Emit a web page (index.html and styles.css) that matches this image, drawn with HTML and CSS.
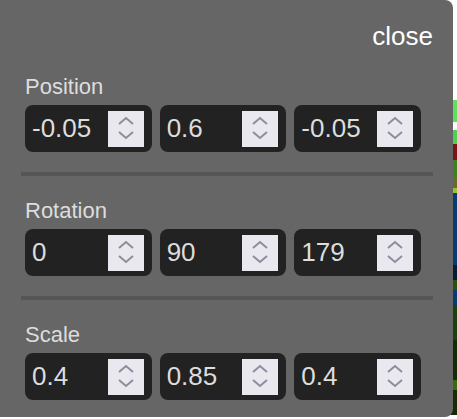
FILE: index.html
```html
<!DOCTYPE html>
<html>
	<head>
		<meta charset="utf-8">
		<title>Transform</title>
		<link rel="stylesheet" href="styles.css">
	</head>
	<body>
		<section class="panel">
			<div class="top">
				<a href="javascript:;" class="close">close</a>
			</div>
			<div class="group">
				<div class="label">Position</div>
				<div class="row">
					<div class="field"><input type="text" value="-0.05"><span class="spin"><svg viewBox="0 0 36 36"><polyline points="11,13 18,7 25,13"/><polyline points="11,21 18,27 25,21"/></svg></span></div>
					<div class="field"><input type="text" value="0.6"><span class="spin"><svg viewBox="0 0 36 36"><polyline points="11,13 18,7 25,13"/><polyline points="11,21 18,27 25,21"/></svg></span></div>
					<div class="field"><input type="text" value="-0.05"><span class="spin"><svg viewBox="0 0 36 36"><polyline points="11,13 18,7 25,13"/><polyline points="11,21 18,27 25,21"/></svg></span></div>
				</div>
			</div>
			<hr>
			<div class="group">
				<div class="label">Rotation</div>
				<div class="row">
					<div class="field"><input type="text" value="0"><span class="spin"><svg viewBox="0 0 36 36"><polyline points="11,13 18,7 25,13"/><polyline points="11,21 18,27 25,21"/></svg></span></div>
					<div class="field"><input type="text" value="90"><span class="spin"><svg viewBox="0 0 36 36"><polyline points="11,13 18,7 25,13"/><polyline points="11,21 18,27 25,21"/></svg></span></div>
					<div class="field"><input type="text" value="179"><span class="spin"><svg viewBox="0 0 36 36"><polyline points="11,13 18,7 25,13"/><polyline points="11,21 18,27 25,21"/></svg></span></div>
				</div>
			</div>
			<hr>
			<div class="group">
				<div class="label">Scale</div>
				<div class="row">
					<div class="field"><input type="text" value="0.4"><span class="spin"><svg viewBox="0 0 36 36"><polyline points="11,13 18,7 25,13"/><polyline points="11,21 18,27 25,21"/></svg></span></div>
					<div class="field"><input type="text" value="0.85"><span class="spin"><svg viewBox="0 0 36 36"><polyline points="11,13 18,7 25,13"/><polyline points="11,21 18,27 25,21"/></svg></span></div>
					<div class="field"><input type="text" value="0.4"><span class="spin"><svg viewBox="0 0 36 36"><polyline points="11,13 18,7 25,13"/><polyline points="11,21 18,27 25,21"/></svg></span></div>
				</div>
			</div>
		</section>
	</body>
</html>
```

FILE: styles.css
```css
body {
	margin: 0;
	font-family: "Liberation Sans", Arial, sans-serif;
	/* scene behind the panel */
	background: linear-gradient(to bottom,
		#fff 0 100px,
		#5ee05e 100px 122px,
		#fff 122px 130px,
		#4fd04f 130px 144px,
		#7a1515 144px 160px,
		#3f7f1f 160px 178px,
		#6a6a30 178px 188px,
		#a0c030 188px 193px,
		#0b3a6e 193px 265px,
		#0a1a30 265px 280px,
		#2a5010 280px 290px,
		#0b3a6e 290px 305px,
		#1e4010 305px 340px,
		#142a08 340px 380px,
		#3a6a10 380px 390px,
		#1a2a08 390px 415px,
		#fff 415px) no-repeat;
	min-height: 419px;
}

.panel {
	width: 453px;
	box-sizing: border-box;
	padding: 21px 20px 17px 21px;
	background: #666;
	border-radius: 0 8px 8px 0;
}

.top {
	display: flex;
	justify-content: flex-end;
	height: 30px;
	line-height: 30px;
}

.close {
	color: #fff;
	font-size: 26px;
	text-decoration: none;
}

.group {
	padding: 0 12px 0 4px;
}

.top + .group {
	margin-top: 23px;
}

.label {
	color: #ddd;
	font-size: 22px;
	line-height: 25px;
	margin-bottom: 6px;
}

hr {
	margin: 20px 0 22px;
	border: 0;
	height: 4px;
	background: #555;
}

.row {
	display: grid;
	grid-template-columns: repeat(3, minmax(0, 1fr));
	gap: 8px;
}

.field {
	display: flex;
	align-items: center;
	height: 47px;
	padding: 0 8px 0 7px;
	background: #222;
	border-radius: 8px;
}

.field input {
	flex: 1;
	width: 0;
	min-width: 0;
	padding: 0;
	border: 0;
	outline: none;
	background: transparent;
	color: #ddd;
	font-family: inherit;
	font-size: 26px;
}

.spin {
	width: 36px;
	height: 36px;
	background: #e9e8ef;
}

.spin svg {
	display: block;
	width: 36px;
	height: 36px;
	fill: none;
	stroke: #8f8d9d;
	stroke-width: 2;
}
```
